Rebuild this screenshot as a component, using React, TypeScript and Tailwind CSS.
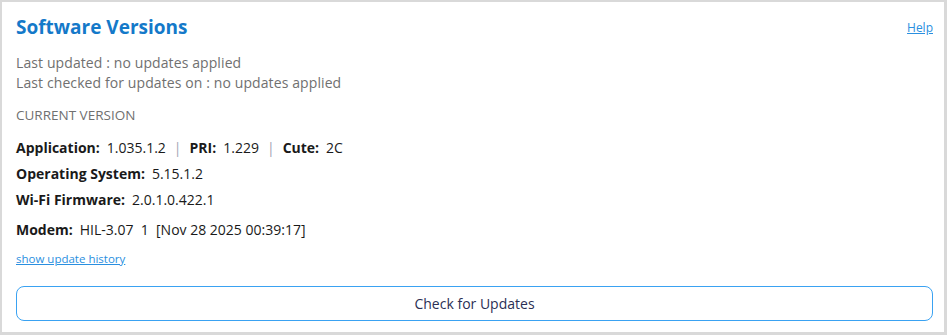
import React from 'react'

const rows: { label: string; value: React.ReactNode }[] = [
  {
    label: 'Operating System:',
    value: '5.15.1.2',
  },
  {
    label: 'Wi-Fi Firmware:',
    value: '2.0.1.0.422.1',
  },
  {
    label: 'Modem:',
    value: 'HIL-3.07\u00a0\u00a01\u00a0\u00a0[Nov 28 2025 00:39:17]',
  },
]

export default function App() {
  return (
    <div
      className="w-[947px] h-[335px] bg-[#d9d9d9] pt-[2px] pl-[2px] pr-[3px] pb-[3px]"
      style={{ fontFamily: '"Open Sans", "Noto Sans", sans-serif' }}
    >
      <div className="w-full h-full bg-white pl-[14px] pr-[11px] flex flex-col">
        <div className="flex items-center justify-between h-[46px] pt-[5px]">
          <h1 className="text-[19px] font-bold text-[#1479c9]">Software Versions</h1>
          <a href="#" className="text-[12px] text-[#2a8fe0] underline">
            Help
          </a>
        </div>
        <div className="text-[14px] text-[#707070] leading-[20px] mt-[5px] tracking-[0.1px]">
          <p>Last updated : no updates applied</p>
          <p>Last checked for updates on : no updates applied</p>
        </div>
        <p className="text-[13.5px] text-[#707070] mt-[12px] leading-[20px]">CURRENT VERSION</p>

        <div className="text-[14px] text-[#1a1a1a] mt-[13px] leading-[20px] flex flex-col gap-[6px]">
          <div className="flex items-center">
            <span className="font-bold">Application:</span>
            <span className="ml-[7px]">1.035.1.2</span>
            <span className="mx-[8px] text-[#a3a3b3]">|</span>
            <span className="font-bold">PRI:</span>
            <span className="ml-[7px]">1.229</span>
            <span className="mx-[8px] text-[#a3a3b3]">|</span>
            <span className="font-bold">Cute:</span>
            <span className="ml-[7px]">2C</span>
          </div>
          {rows.map((r, i) => (
            <div key={i} className={'flex items-center' + (i === 2 ? ' mt-[4px]' : '')}>
              <span className="font-bold">{r.label}</span>
              <span className="ml-[7px] whitespace-pre">{r.value}</span>
            </div>
          ))}
        </div>

        <a href="#" className="text-[11.5px] text-[#2a8fe0] underline mt-[10px] w-fit">
          show update history
        </a>

        <button className="mt-[19px] h-[35px] w-full rounded-[8px] border border-[#3aa2f2] text-[14px] text-[#2b2f55] bg-white">
          Check for Updates
        </button>
      </div>
    </div>
  )
}
